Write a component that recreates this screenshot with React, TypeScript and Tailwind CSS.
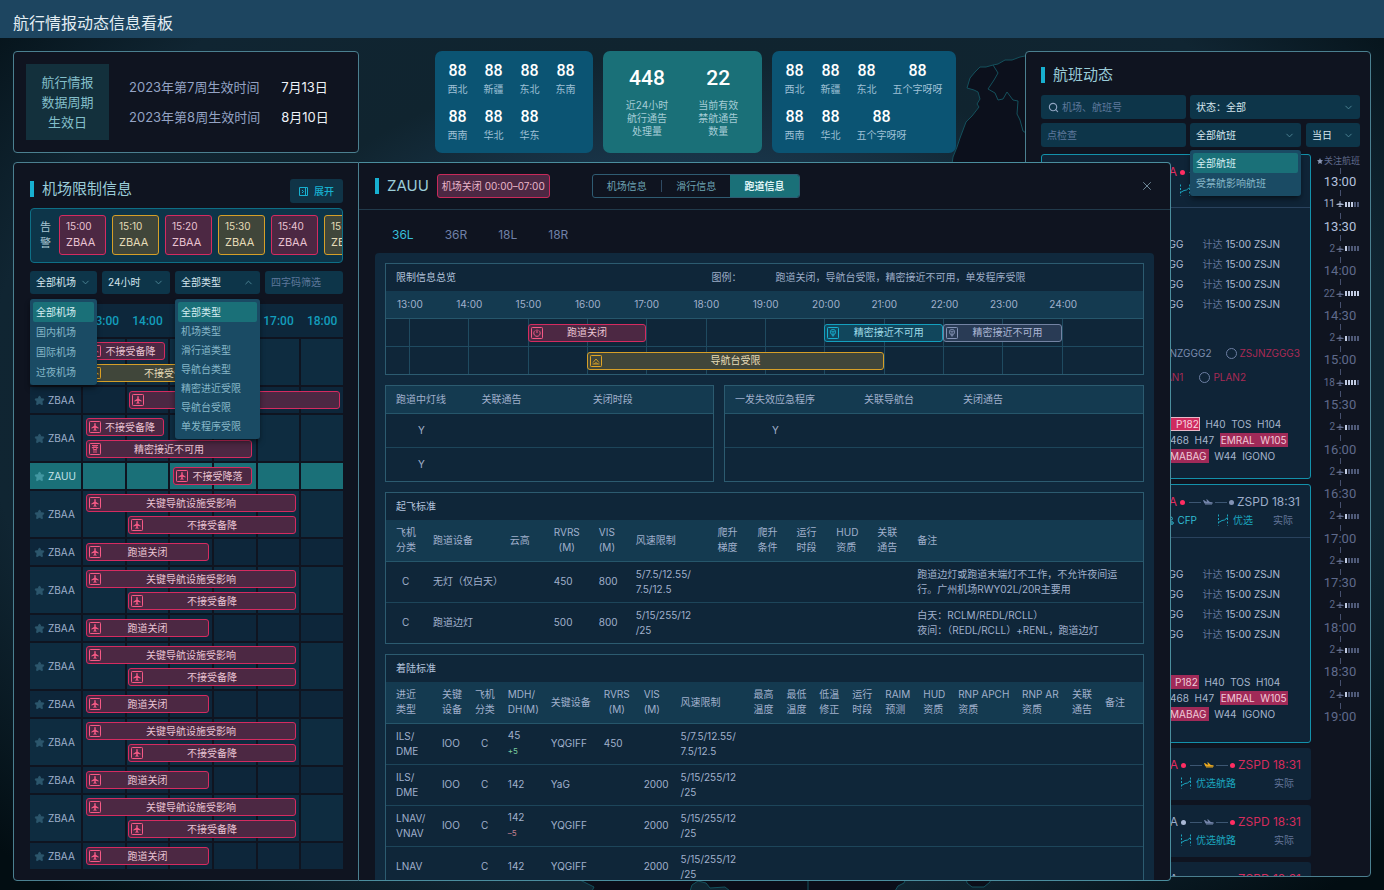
import type { ReactNode } from 'react'
import { ChevronDown, ChevronUp, Search, Star, X } from 'lucide-react'

// ── Glyphs ──

type Tone = 'red' | 'amber' | 'cyan' | 'gray'
type GlyphName = 'plane' | 'tower' | 'power' | 'beacon' | 'signal'

const TONES: Record<Tone, string> = {
  red: 'border-[#d52b60] bg-[#4c2843] text-[#e9c3d2]',
  amber: 'border-[#d69f28] bg-[#40463a] text-[#e6dcb8]',
  cyan: 'border-[#149fbe] bg-[#11465c] text-[#9fdbe8]',
  gray: 'border-[#7383a3] bg-[#293b55] text-[#a9b6d4]',
}

const GLYPH_TONES: Record<Tone, string> = {
  red: 'text-[#f65a86]',
  amber: 'text-[#e0a526]',
  cyan: 'text-[#17b0d0]',
  gray: 'text-[#8494b6]',
}

function Glyph({ name, tone }: { name: GlyphName; tone: Tone }) {
  return (
    <svg viewBox="0 0 12 12" className={`size-3 shrink-0 ${GLYPH_TONES[tone]}`} fill="none" stroke="currentColor" aria-hidden="true">
      <rect x="0.5" y="0.5" width="11" height="11" rx="0.8" />
      {name === 'plane' && (
        <path d="M6 2c.5 0 .7.6.7 1.1v1.6l3 2v.9l-3-.9v1.6l.9.8v.7L6 9.400l-1.600.4v-.7l.9-.8V6.700l-3 .9v-.9l3-2V3.100C5.300 2.600 5.500 2 6 2Z" fill="currentColor" stroke="none" />
      )}
      {name === 'tower' && (
        <>
          <path d="M3 2.500h6M2.800 4.500h6.400M4 4.500 4.500 6.500h3L8 4.500M5 6.500v3.500M7 6.500v3.500" strokeWidth="0.9" />
          <path d="M4 2.500h4v2H4z" fill="currentColor" stroke="none" opacity="0.5" />
        </>
      )}
      {name === 'power' && <path d="M6 2.500v3.500M4.200 3.500a3.200 3.200 0 1 0 3.600 0" strokeWidth="1" />}
      {name === 'beacon' && <path d="M2.500 9h7M3 7.500 6 4l3 3.500M4.500 8.800a1.600 1.600 0 0 1 3 0" strokeWidth="0.9" />}
      {name === 'signal' && (
        <>
          <circle cx="6" cy="5" r="2.700" strokeWidth="0.8" />
          <path d="M4.300 4.300h3.400M4.600 6h2.800M4.800 7.800 6 9.400l1.200-1.600" strokeWidth="0.9" />
        </>
      )}
    </svg>
  )
}

function RouteIcon() {
  return (
    <svg viewBox="0 0 12 12" className="mr-1 size-3 shrink-0" fill="none" stroke="currentColor" aria-hidden="true">
      <path d="M1.500.5v11" strokeDasharray="2 1.500" />
      <path d="M10.500.5v11" strokeDasharray="2 1.500" />
      <path d="M1.500 8.500 5 6.500 7.500 6 10.500 3.500" />
    </svg>
  )
}

function PlanIcon() {
  return (
    <svg viewBox="0 0 10 10" className="mr-[3px] size-[10px] shrink-0" fill="none" stroke="currentColor" aria-hidden="true">
      <circle cx="2" cy="2" r="1.300" />
      <circle cx="8" cy="8" r="1.300" />
      <path d="M3.500 2h3.300a1.600 1.600 0 0 1 0 3.200H3.500a1.500 1.500 0 0 0 0 2.900h3" />
    </svg>
  )
}

function FlightGlyph({ className }: { className: string }) {
  return (
    <svg viewBox="0 0 10 6" className={`h-[6px] w-[10px] ${className}`} fill="currentColor" aria-hidden="true">
      <path d="M0 1.200 1 1l1.400 1.300L4.200 2.700 3.200.3 4.200.4 6.800 3l2.200.3c1 .2 1 1.300 0 1.500L2 4.700 1.200 4 0 1.200ZM2 5.200h7v.5H2z" />
    </svg>
  )
}

// ── Shared pieces ──

function Title({ children }: { children: ReactNode }) {
  return (
    <h2 className="flex items-center gap-2 text-[15px] leading-5 text-[#9accd8]">
      <span className="h-4 w-1 bg-[#17b0d0]" />
      {children}
    </h2>
  )
}

function Bar({ label, tone = 'red', glyph = 'plane', tight = false }: { label: string; tone?: Tone; glyph?: GlyphName; tight?: boolean }) {
  return (
    <div className={`flex h-[18px] w-full items-center rounded-[3px] border pl-[2px] ${TONES[tone]}`}>
      <Glyph name={glyph} tone={tone} />
      <span className={`flex-1 text-center whitespace-nowrap ${tight ? 'pr-1' : 'pr-[14px]'}`}>{label}</span>
    </div>
  )
}

interface SelectProps {
  label: string
  options: string[]
  open?: boolean
  compact?: boolean
  menuGap?: string
  className?: string
}

function Select({ label, options, open = false, compact = false, menuGap = 'mt-[5px]', className = '' }: SelectProps) {
  const Chevron = open && compact ? ChevronUp : ChevronDown
  return (
    <div className={`relative ${className}`}>
      <select aria-label={label} defaultValue={options[0]} className="h-full w-full appearance-none rounded-[3px] bg-[#0d3549] pl-[6px] text-[#d5e6ee] outline-none">
        {options.map(option => <option key={option}>{option}</option>)}
      </select>
      <Chevron className="pointer-events-none absolute inset-y-0 right-[6px] my-auto size-[11px] text-[#4f8797]" strokeWidth={2} />
      {open && (
        <ul role="listbox" aria-label={label} className={`absolute top-full z-20 w-full rounded-[3px] bg-[#1a4b64] p-[3px] text-[#86b7c8] shadow-md shadow-black/40 ${menuGap}`}>
          {options.map((option, index) => (
            <li
              key={option}
              role="option"
              aria-selected={index === 0}
              className={`flex items-center rounded-[2px] pl-[3px] whitespace-nowrap ${compact && index > 0 ? 'h-[19px]' : 'h-5'} ${index === 0 ? 'bg-[#1a7078] text-[#d5eef2]' : ''}`}
            >
              {option}
            </li>
          ))}
        </ul>
      )}
    </div>
  )
}

// ── Background map ──

function MapBackdrop() {
  return (
    <>
      <svg viewBox="0 0 80 115" className="absolute top-3 right-[354px] h-[115px] w-20" fill="#0c101c" stroke="#14505c" aria-hidden="true">
        <path d="M2 114 3 107 7 97 10 88 16 72 22 66 29 57 27 54 30 49 28 42 24 40 17 38 20 28 25 22 30 17 36 17 43 15 48 14 55 10 62 10 70 7 80 5v110H2Z" />
        <path d="m43 15 5 8-4 7-6 9 7 4 3 7 5-1 4-7 6 8 5 1-1 13 3 6 3 11 6 4" fill="none" />
      </svg>
      <svg viewBox="0 0 420 12" className="absolute bottom-0 left-[580px] h-3 w-[420px]" fill="#0a0e19" stroke="#14505c" aria-hidden="true">
        <path d="M0 2 8 6 14 9 12 13H110L112 7 118 3 126 5 130 10 145 9 150 13H315L318 8 324 5 326 0H0Z" />
        <path d="M386 0 387 5 392 9 404 9 410 4 411 0Z" />
        <path d="M228 0v12" fill="none" />
      </svg>
    </>
  )
}

// ── Top area ──

function CycleCard() {
  return (
    <section className="flex items-center rounded-[4px] border border-[#4b8090] bg-[#0f1420] p-3 text-[13px] leading-5">
      <p className="flex h-[76px] w-[83px] items-center justify-center bg-[#13303c] text-center text-[#83bfca]">
        航行情报<br />数据周期<br />生效日
      </p>
      <dl className="ml-5 grid grid-cols-[auto_auto] gap-x-[21px] gap-y-[10px] text-[#94a3c4]">
        <dt>2023年第7周生效时间</dt>
        <dd className="text-[#eef2f8]">7月13日</dd>
        <dt>2023年第8周生效时间</dt>
        <dd className="text-[#eef2f8]">8月10日</dd>
      </dl>
    </section>
  )
}

function RegionStats({ rows }: { rows: string[][] }) {
  return (
    <section className="flex min-w-[158px] flex-col gap-[10px] rounded-[7px] bg-[#0b5473] px-[13px] py-[10px]">
      {rows.map(row => (
        <div key={row.join()} className="flex gap-4">
          {row.map(name => (
            <div key={name} className="text-center text-[#9fc0d6]">
              <p className="font-['Roboto'] text-base leading-5 font-medium text-white">88</p>
              <p className="leading-4">{name}</p>
            </div>
          ))}
        </div>
      ))}
    </section>
  )
}

function NoticeStats() {
  const items = [
    ['448', '近24小时\n航行通告\n处理量'],
    ['22', '当前有效\n禁航通告\n数量'],
  ]
  return (
    <section className="flex w-[159px] justify-center gap-[30px] rounded-[7px] bg-[#1a7078] pt-[15px]">
      {items.map(([value, note]) => (
        <div key={value} className="text-center">
          <p className="font-['Roboto'] text-[21px] leading-6 font-medium text-white">{value}</p>
          <p className="mt-[9px] leading-[13px] whitespace-pre-line text-[#a5ccd6]">{note}</p>
        </div>
      ))}
    </section>
  )
}

// ── Airport restrictions ──

interface Restriction {
  from: number
  to: number
  label: string
  tone?: Tone
  glyph?: GlyphName
  tight?: boolean
}

interface AirportRow {
  code: string
  bars: Restriction[]
  active?: boolean
}

// from/to run along a 260 unit axis, 13:00 to 19:00
const AXIS = 260
const pair: AirportRow[] = [
  { code: 'ZBAA', bars: [{ from: 3, to: 213, label: '关键导航设施受影响' }, { from: 45, to: 213, label: '不接受备降' }] },
  { code: 'ZBAA', bars: [{ from: 3, to: 126, label: '跑道关闭' }] },
]

const AIRPORTS: AirportRow[] = [
  { code: 'ZBAA', bars: [{ from: 3, to: 82, label: '不接受备降', tight: true }, { from: 3, to: 169, label: '不接受备降', tone: 'amber' }] },
  { code: 'ZBAA', bars: [{ from: 46, to: 257, label: '不接受备降' }] },
  { code: 'ZBAA', bars: [{ from: 3, to: 81, label: '不接受备降', tight: true }, { from: 3, to: 169, label: '精密接近不可用', glyph: 'tower' }] },
  { code: 'ZAUU', active: true, bars: [{ from: 90, to: 169, label: '不接受降落', tight: true }] },
  ...pair, ...pair, ...pair, ...pair, ...pair,
]

const ALERTS = ['15:00', '15:10', '15:20', '15:30', '15:40', '15:50']
const HOURS = ['13:00', '14:00', '15:00', '16:00', '17:00', '18:00']

function AirportPanel() {
  return (
    <section className="flex flex-1 flex-col rounded-l-[4px] border border-[#4b8090] bg-[#0f1420] pt-4 pr-[15px] pl-4">
      <div className="flex items-start justify-between">
        <Title>机场限制信息</Title>
        <button type="button" className="flex h-6 w-[53px] items-center justify-center gap-[6px] rounded-[3px] bg-[#103447] font-medium text-[#17b0d0]">
          <svg viewBox="0 0 9 9" className="size-[9px]" fill="none" stroke="currentColor" aria-hidden="true">
            <path d="M.5.5h8v8h-8zM6.500.5v8M3 3l1.500 1.500L3 6" />
          </svg>
          展开
        </button>
      </div>

      <div className="mt-[5px] flex h-[55px] items-start gap-[6px] overflow-hidden rounded-[4px] border border-[#0e6f86] bg-[#0d3549] pt-[6px] pl-[7px]">
        <p className="w-[15px] shrink-0 pt-1 text-center text-[11px] leading-4 text-[#a9c6d3]">告警</p>
        {ALERTS.map((time, index) => (
          <div key={time} className={`flex h-10 w-[47px] shrink-0 flex-col justify-center rounded-[3px] border pb-[2px] pl-[6px] ${TONES[index % 2 ? 'amber' : 'red']}`}>
            <span className="leading-4">{time}</span>
            <span className="text-[11px] leading-4">ZBAA</span>
          </div>
        ))}
      </div>

      <div className="mt-2 grid h-[23px] grid-cols-[67fr_68fr_85fr_78fr] gap-[5px]">
        <Select label="机场" options={['全部机场', '国内机场', '国际机场', '过夜机场']} open />
        <Select label="时间范围" options={['24小时']} />
        <Select label="类型" options={['全部类型', '机场类型', '滑行道类型', '导航台类型', '精密进近受限', '导航台受限', '单发程序受限']} open compact />
        <input aria-label="四字码筛选" placeholder="四字码筛选" className="w-full min-w-0 rounded-[3px] bg-[#0d3549] px-[6px] outline-none placeholder:text-[#5e789b]" />
      </div>

      <table className="mt-[10px] block">
        <thead className="block">
          <tr className="grid h-[33px] grid-cols-[51px_repeat(6,1fr)] items-center gap-[2px] bg-[#0d273b] font-['Roboto'] text-xs text-[#139dbb]">
            <th><span className="sr-only">机场</span></th>
            {HOURS.map(hour => <th key={hour} className="font-medium">{hour}</th>)}
          </tr>
        </thead>
        <tbody className="mt-[2px] flex flex-col gap-[2px]">
          {AIRPORTS.map((row, index) => {
            const tall = row.bars.length > 1
            const cell = row.active ? 'bg-[#1a7078]' : tall ? 'bg-[#0e2c40]' : 'bg-[#0d263a]'
            return (
              <tr key={index} className={`grid grid-cols-[51px_repeat(6,1fr)] gap-[2px] ${tall ? 'h-[46px]' : 'h-[26px]'}`}>
                <th scope="row" className={`col-start-1 row-start-1 flex items-center gap-[3px] pl-1 font-normal ${cell} ${row.active ? 'text-[#c5e3e8]' : 'text-[#9fb0cc]'}`}>
                  <Star className={`size-[11px] ${row.active ? 'fill-[#4297a1] text-[#4297a1]' : 'fill-[#2c566c] text-[#2c566c]'}`} />
                  {row.code}
                </th>
                {HOURS.map((hour, column) => <td key={hour} className={`row-start-1 ${cell}`} style={{ gridColumnStart: column + 2 }} />)}
                <td className="col-start-2 col-end-8 row-start-1 flex flex-col justify-center gap-1">
                  {row.bars.map(bar => (
                    <div key={bar.label + bar.tone} style={{ marginLeft: `${(bar.from / AXIS) * 100}%`, width: `${((bar.to - bar.from) / AXIS) * 100}%` }}>
                      <Bar label={bar.label} tone={bar.tone} glyph={bar.glyph} tight={bar.tight} />
                    </div>
                  ))}
                </td>
              </tr>
            )
          })}
        </tbody>
      </table>
    </section>
  )
}

// ── Runway detail ──

interface Column {
  label: string
  width: number
  body?: string
}

function DataTable({ columns, rows, tall = true }: { columns: Column[]; rows: ReactNode[][]; tall?: boolean }) {
  const total = columns.reduce((sum, column) => sum + column.width, 0)
  return (
    <table className="w-full table-fixed border-collapse leading-[15px]">
      <colgroup>
        {columns.map((column, index) => <col key={index} style={{ width: `${(column.width / total) * 100}%` }} />)}
      </colgroup>
      <thead>
        <tr className={`border-b border-[#26566b] bg-[#143a50] ${tall ? 'h-[41px]' : 'h-[27px]'}`}>
          {columns.map((column, index) => (
            <th key={index} scope="col" className="p-0 text-left font-normal first:pl-[10px]">
              <span className={`inline-block align-middle whitespace-pre ${column.label.endsWith('\n(M)') ? 'text-center' : ''}`}>{column.label}</span>
            </th>
          ))}
        </tr>
      </thead>
      <tbody>
        {rows.map((row, index) => (
          <tr key={index} className={`border-b border-[#1d455a] last:border-b-0 ${tall ? 'h-[41px]' : 'h-[34px]'}`}>
            {columns.map((column, cell) => (
              <td key={cell} className={`p-0 whitespace-pre ${column.body ?? (cell === 0 ? 'pl-[10px]' : '')}`}>{row[cell]}</td>
            ))}
          </tr>
        ))}
      </tbody>
    </table>
  )
}

function Box({ title, children }: { title?: string; children: ReactNode }) {
  return (
    <section className="border border-[#2c5b70] bg-[#0f2639]">
      {title && <h3 className="flex h-[27px] items-center pl-[10px] text-[#b3c3dc]">{title}</h3>}
      {children}
    </section>
  )
}

const TIMES = ['13:00', '14:00', '15:00', '16:00', '17:00', '18:00', '19:00', '20:00', '21:00', '22:00', '23:00', '24:00']

const TRACKS: { start: number; hours: number; label: string; tone: Tone; glyph: GlyphName; tight?: boolean }[][] = [
  [
    { start: 15, hours: 2, label: '跑道关闭', tone: 'red', glyph: 'power' },
    { start: 20, hours: 2, label: '精密接近不可用', tone: 'cyan', glyph: 'signal', tight: true },
    { start: 22, hours: 2, label: '精密接近不可用', tone: 'gray', glyph: 'signal', tight: true },
  ],
  [{ start: 16, hours: 5, label: '导航台受限', tone: 'amber', glyph: 'beacon' }],
]

function Overview() {
  return (
    <section className="border border-[#2c5b70] bg-[#0f2639]">
      <div className="grid h-[27px] grid-cols-[43%_64px_1fr] items-center text-[#9babc6]">
        <h3 className="pl-[10px] text-[#b3c3dc]">限制信息总览</h3>
        <span>图例：</span>
        <span>跑道关闭，导航台受限，精密接近不可用，单发程序受限</span>
      </div>
      <div className="grid h-7 grid-cols-[repeat(12,7.95%)] items-center border-b border-[#26566b] bg-[#143a50] pl-[11px]">
        {TIMES.map(time => <span key={time}>{time}</span>)}
      </div>
      {TRACKS.map((track, index) => (
        <div key={index} className="grid h-7 grid-cols-[23px_repeat(11,7.84%)_1fr] items-center border-b border-[#1f4a60] last:h-[27px] last:border-b-0">
          {TIMES.map((time, column) => (
            <div key={time} className="row-start-1 h-full border-l border-[#1f4a60]" style={{ gridColumnStart: column + 2 }} />
          ))}
          {track.map(bar => (
            <div key={bar.start} className="row-start-1" style={{ gridColumn: `${bar.start - 11} / span ${bar.hours}` }}>
              <Bar label={bar.label} tone={bar.tone} glyph={bar.glyph} tight={bar.tight} />
            </div>
          ))}
        </div>
      ))}
    </section>
  )
}

const TAKEOFF: Column[] = [
  { label: '飞机\n分类', width: 47, body: 'pl-4' },
  { label: '跑道设备', width: 77 },
  { label: '云高', width: 44 },
  { label: 'RVRS\n(M)', width: 45 },
  { label: 'VIS\n(M)', width: 37 },
  { label: '风速限制', width: 82 },
  { label: '爬升\n梯度', width: 40 },
  { label: '爬升\n条件', width: 39 },
  { label: '运行\n时段', width: 40 },
  { label: 'HUD\n资质', width: 41 },
  { label: '关联\n通告', width: 40 },
  { label: '备注', width: 226 },
]

const LANDING: Column[] = [
  { label: '进近\n类型', width: 56 },
  { label: '关键\n设备', width: 33 },
  { label: '飞机\n分类', width: 33, body: 'pl-[6px]' },
  { label: 'MDH/\nDH(M)', width: 43 },
  { label: '关键设备', width: 53 },
  { label: 'RVRS\n(M)', width: 40 },
  { label: 'VIS\n(M)', width: 37 },
  { label: '风速限制', width: 73 },
  { label: '最高\n温度', width: 33 },
  { label: '最低\n温度', width: 33 },
  { label: '低温\n修正', width: 33 },
  { label: '运行\n时段', width: 33 },
  { label: 'RAIM\n预测', width: 38 },
  { label: 'HUD\n资质', width: 35 },
  { label: 'RNP APCH\n资质', width: 64 },
  { label: 'RNP AR\n资质', width: 50 },
  { label: '关联\n通告', width: 33 },
  { label: '备注', width: 38 },
]

const WIND_A = '5/7.5/12.55/\n7.5/12.5'
const WIND_B = '5/15/255/12\n/25'

function RunwayDetail() {
  return (
    <section className="absolute top-[124px] right-[213px] bottom-[9px] left-[359px] z-10 flex flex-col overflow-hidden rounded-r-[4px] border border-l-0 border-[#4b8e9e] bg-[#0f1420]">
      <header className="flex h-[47px] shrink-0 items-center border-b border-[#213a4b] px-4">
        <Title>ZAUU</Title>
        <span className="ml-2 flex h-6 items-center rounded-[3px] border border-[#c82a5a] bg-[#4c2843] px-1 whitespace-nowrap text-[#e9b6c9]">机场关闭 00:00–07:00</span>
        <div className="ml-[42px] flex h-6 w-[208px] items-center rounded-[3px] border border-[#2f5c72] text-[#6da3b3]">
          <button type="button" className="flex-1 leading-3">机场信息</button>
          <button type="button" className="flex-1 border-l border-[#2f4a63] leading-3">滑行信息</button>
          <button type="button" className="h-full flex-1 rounded-r-[2px] bg-[#1a7078] font-bold text-[#def3f5]">跑道信息</button>
        </div>
        <button type="button" aria-label="关闭" className="ml-auto"><X className="size-[14px] text-[#7c97a8]" strokeWidth={1.500} /></button>
      </header>

      <nav className="flex h-[43px] shrink-0 items-center gap-[31px] px-[33px] pt-[6px] text-xs text-[#6f80a8]">
        <button type="button" className="text-[#38bfd9]">36L</button>
        <button type="button">36R</button>
        <button type="button">18L</button>
        <button type="button">18R</button>
      </nav>

      <div className="mx-4 flex min-h-0 flex-1 flex-col gap-[10px] overflow-hidden rounded-t-[4px] bg-[#10293d] p-[10px] text-[#a0b0cc] [&>*]:shrink-0">
        <Overview />
        <div className="grid grid-cols-[329fr_420fr] gap-[10px]">
          <Box>
            <DataTable
              tall={false}
              columns={[{ label: '跑道中灯线', width: 96, body: 'pl-[32px]' }, { label: '关联通告', width: 112 }, { label: '关闭时段', width: 121 }]}
              rows={[['Y'], ['Y']]}
            />
          </Box>
          <Box>
            <DataTable
              tall={false}
              columns={[{ label: '一发失效应急程序', width: 139, body: 'pl-[47px]' }, { label: '关联导航台', width: 99 }, { label: '关闭通告', width: 180 }]}
              rows={[['Y'], ['']]}
            />
          </Box>
        </div>
        <Box title="起飞标准">
          <DataTable
            columns={TAKEOFF}
            rows={[
              ['C', '无灯（仅白天）', '', '450', '800', WIND_A, '', '', '', '', '', '跑道边灯或跑道末端灯不工作，不允许夜间运\n行。广州机场RWY02L/20R主要用'],
              ['C', '跑道边灯', '', '500', '800', WIND_B, '', '', '', '', '', '白天：RCLM/REDL/RCLL）\n夜间：（REDL/RCLL）+RENL，跑道边灯'],
            ]}
          />
        </Box>
        <Box title="着陆标准">
          <DataTable
            columns={LANDING}
            rows={[
              ['ILS/\nDME', 'IOO', 'C', <>45{'\n'}<small className="text-[8px] text-[#7ccb9f]">+5</small></>, 'YQGIFF', '450', '', WIND_A],
              ['ILS/\nDME', 'IOO', 'C', '142', 'YaG', '', '2000', WIND_B],
              ['LNAV/\nVNAV', 'IOO', 'C', <>142{'\n'}<small className="text-[8px] text-[#c07f8f]">–5</small></>, 'YQGIFF', '', '2000', WIND_B],
              ['LNAV', '', 'C', '142', 'YQGIFF', '', '2000', WIND_B],
            ]}
          />
        </Box>
      </div>
    </section>
  )
}

// ── Flights ──

interface Leg {
  fromAlert?: boolean
  toAlert?: boolean
  delayed?: boolean
  cfp?: boolean
}

function LegHeader({ fromAlert, toAlert, delayed, cfp }: Leg) {
  return (
    <div className="py-2">
      <div className="flex h-[18px] items-center justify-end pr-[10px] text-xs">
        <span className={fromAlert ? 'text-[#e42b60]' : 'text-[#9dadc9]'}>ZBAA</span>
        <span className={`mr-1 ml-[3px] size-[5px] rounded-full ${fromAlert ? 'bg-[#ff2d62]' : 'bg-[#a9b8d4]'}`} />
        <span className="h-px w-3 bg-[#3c5672]" />
        <FlightGlyph className={`mx-[2px] ${delayed ? 'text-[#eba91f]' : 'text-[#7485ab]'}`} />
        <span className="h-px w-3 bg-[#3c5672]" />
        <span className={`mr-[3px] ml-[2px] size-[5px] rounded-full ${toAlert ? 'bg-[#ff2d62]' : 'bg-[#8393b5]'}`} />
        <span className={toAlert ? 'text-[#d42c5c]' : 'text-[#9dadc9]'}>ZSPD 18:31</span>
      </div>
      <div className="flex h-[18px] items-center justify-end pr-[17px] text-[#1ba5bf]">
        {cfp && <span className="mr-5 flex items-center text-[#30bcd2]"><PlanIcon />CFP</span>}
        <RouteIcon />
        {cfp ? '优选' : '优选航路'}
        <span className={`text-[#64769a] ${cfp ? 'ml-5' : 'ml-[38px]'}`}>实际</span>
      </div>
    </div>
  )
}

function Arrivals() {
  return (
    <div className="pt-[26px]">
      {[0, 1, 2, 3].map(index => (
        <div key={index} className="flex h-5 items-center justify-end gap-[3px] pr-[30px] text-[#aebbd2]">
          <span className="mr-4">ZGGG</span>
          <span className="text-[#64769a]">计达</span>
          <span>15:00</span>
          <span>ZSJN</span>
        </div>
      ))}
    </div>
  )
}

function RouteText({ outlined = false }: { outlined?: boolean }) {
  const hit = 'bg-[#a02a58] text-[#f0cbd8]'
  return (
    <div className="ml-32 space-y-[2px] leading-[14px] whitespace-pre text-[#a6b5cc]">
      <p><span className={`inline-block pl-[5px] ${outlined ? 'border border-[#e8b9c9] bg-[#cf2c5e] leading-3 text-[#f7d6e0]' : `pr-px ${hit}`}`}>P182</span>{'  '}H40{'  '}TOS{'  '}H104</p>
      <p>468{'  '}H47{'  '}<span className={`inline-block px-px ${hit}`}>EMRAL{'  '}W105</span></p>
      <p><span className={`inline-block pr-[2px] ${hit}`}>MABAG</span>{'  '}W44{'  '}IGONO</p>
    </div>
  )
}

function RadioOption({ name, label, muted = false }: { name: string; label: string; muted?: boolean }) {
  return (
    <label className={`flex items-center gap-[3px] ${muted ? 'text-[#7b8cae]' : 'text-[#a92a55]'}`}>
      <input type="radio" name={name} className="size-[11px] appearance-none rounded-full border border-[#6d7fa3]" />
      {label}
    </label>
  )
}

const LOADS = [11, 2, 22, 2, 18, 2, 2, 2, 2, 2, 2, 2]

function clock(index: number) {
  return `${13 + Math.floor(index / 2)}:${index % 2 ? '30' : '00'}`
}

function litBars(load: number) {
  return load > 20 ? 5 : load > 15 ? 4 : load > 10 ? 3 : 1
}

function Timeline() {
  const tick = <span className="h-[6px] w-px bg-[#46506e]" />
  return (
    <aside className="w-[49px] shrink-0 pl-[9px] text-[#5f6a8b]">
      <p className="flex items-center justify-end text-[9px] leading-[14px] whitespace-nowrap">
        <svg viewBox="0 0 8 8" className="mr-px size-[6px] shrink-0" fill="#8b97b5" aria-hidden="true">
          <path d="m4 0 1.200 2.600L8 3 6 5l.5 3L4 6.500 1.500 8 2 5 0 3l2.800-.4Z" />
        </svg>
        关注航班
      </p>
      <div className="flex h-[555px] flex-col items-center justify-between font-['Roboto']">
        {tick}
        {LOADS.map((load, index) => (
          <div key={index} className="contents">
            <span className={`text-[13px] leading-3 ${index < 2 ? 'text-[#b4c1dc]' : ''}`}>{clock(index)}</span>
            {tick}
            <span className={`flex w-10 items-center text-[10px] leading-3 ${index === 0 ? 'text-[#aab7d3]' : ''}`}>
              <span className="w-[15px] text-right">{load}</span>
              <svg viewBox="0 0 8 8" className="mx-px size-2 shrink-0" fill="currentColor" aria-hidden="true">
                <path d="M3.500 1h1v2.200L7.500 4v1h-3v1.200h1V7h-3v-.8h1V5h-3V4l3-.8Z" />
              </svg>
              <span className="flex gap-px">
                {[0, 1, 2, 3, 4].map(bar => <i key={bar} className={`h-[5px] w-[2px] ${bar < litBars(load) ? 'bg-[#c3cde4]' : 'bg-[#4e5977]'}`} />)}
              </span>
            </span>
            {tick}
          </div>
        ))}
        <span className="text-[13px] leading-3">19:00</span>
      </div>
    </aside>
  )
}

function FlightPanel() {
  return (
    <section className="flex h-full w-[346px] shrink-0 flex-col overflow-hidden rounded-[4px] border border-[#4b8090] bg-[#0f1420] pt-[13px] pr-[10px] pl-[15px]">
      <Title>航班动态</Title>
      <div className="mt-[10px] grid grid-cols-[145fr_170fr] gap-1">
        <label className="flex h-6 items-center gap-[3px] rounded-[3px] bg-[#0d3549] pl-[7px]">
          <Search className="size-[11px] shrink-0 text-[#8fa3c0]" strokeWidth={2.500} />
          <input aria-label="机场、航班号" placeholder="机场、航班号" className="w-full min-w-0 outline-none placeholder:text-[#5e789b]" />
        </label>
        <Select label="状态" options={['状态：全部']} className="h-6" />
        <input aria-label="点检查" placeholder="点检查" className="h-6 min-w-0 rounded-[3px] bg-[#0d3549] px-[6px] outline-none placeholder:text-[#5e789b]" />
        <div className="grid h-6 grid-cols-[111fr_54fr] gap-[5px]">
          <Select label="航班" options={['全部航班', '受禁航影响航班']} open menuGap="mt-[3px]" />
          <Select label="日期" options={['当日']} />
        </div>
      </div>

      <div className="mt-[7px] flex min-h-0 flex-1">
        <div className="flex min-w-0 flex-1 flex-col gap-[5px] overflow-hidden [&>article]:shrink-0 [&>article]:bg-[#0f2437]">
          <article className="h-[325px] rounded-[3px] border border-[#1391ab]">
            <div className="border-b border-[#29425d]"><LegHeader fromAlert toAlert /></div>
            <Arrivals />
            <div className="mt-[30px] flex h-[18px] items-center justify-end gap-[14px] pr-[10px]">
              <RadioOption name="route" label="ZSJNZGGG2" muted />
              <RadioOption name="route" label="ZSJNZGGG3" />
            </div>
            <div className="mt-[6px] mb-[31px] flex h-[18px] items-center justify-end gap-4 pr-16">
              <RadioOption name="plan" label="PLAN1" />
              <RadioOption name="plan" label="PLAN2" />
            </div>
            <RouteText outlined />
          </article>
          <article className="h-[259px] rounded-[3px] border border-[#1391ab]">
            <div className="border-b border-[#29425d]"><LegHeader fromAlert cfp /></div>
            <Arrivals />
            <div className="mt-[31px]"><RouteText /></div>
          </article>
          <article className="rounded-[3px]"><LegHeader fromAlert toAlert delayed /></article>
          <article className="rounded-[3px]"><LegHeader toAlert /></article>
          <article className="rounded-[3px]"><LegHeader toAlert /></article>
        </div>
        <Timeline />
      </div>
    </section>
  )
}

// ── Page ──

export default function App() {
  return (
    <div className="flex h-screen min-h-[890px] flex-col overflow-hidden bg-[radial-gradient(ellipse_at_50%_45%,#1b3950_30%,#10242f_50%,#102532_72%,#020d12_96%)] font-['Inter','Noto_Sans_CJK_SC',sans-serif] text-[10px]">
      <header className="flex h-[38px] shrink-0 items-center bg-[#1d4560] px-[13px] pt-2">
        <h1 className="text-base text-[#e3edf3]">航行情报动态信息看板</h1>
      </header>
      <main className="relative flex min-h-0 flex-1 px-[13px] pt-[13px]">
        <MapBackdrop />
        <div className="relative flex w-[346px] shrink-0 flex-col gap-[9px] pb-[9px]">
          <CycleCard />
          <AirportPanel />
        </div>
        <div className="relative flex min-w-0 flex-1 items-start justify-center gap-[10px] pl-[6px] [&>section]:h-[102px]">
          <RegionStats rows={[['西北', '新疆', '东北', '东南'], ['西南', '华北', '华东']]} />
          <NoticeStats />
          <RegionStats rows={[['西北', '新疆', '东北', '五个字呀呀'], ['西南', '华北', '五个字呀呀']]} />
        </div>
        <div className="relative pb-[13px]">
          <FlightPanel />
        </div>
        <RunwayDetail />
      </main>
    </div>
  )
}
